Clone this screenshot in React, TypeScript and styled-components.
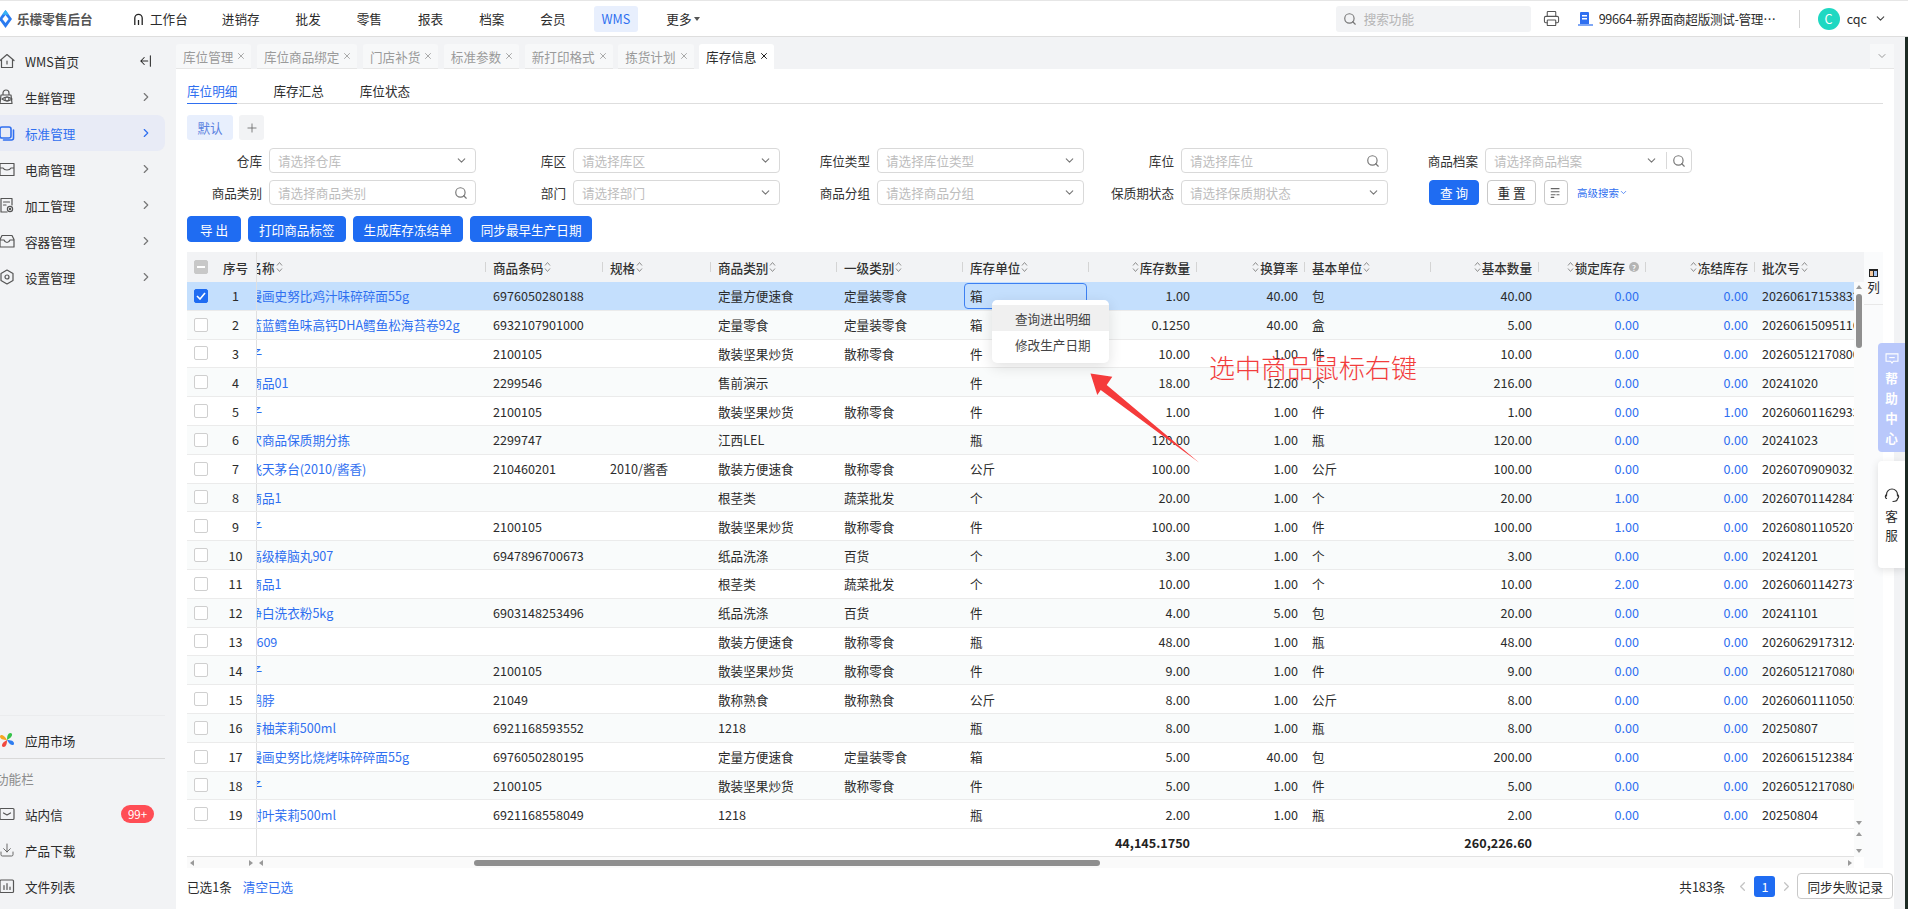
import React from "react";
import styled, { createGlobalStyle } from "styled-components";
import { ChevronDown, ChevronLeft, ChevronRight, Printer, Search, X, Plus, Download } from "lucide-react";

const GlobalStyle = createGlobalStyle`
  html, body { margin: 0; padding: 0; overflow: hidden; background: #f2f3f5; }
  * { box-sizing: border-box; }
  body {
    font-family: "Noto Sans CJK SC", "Noto Sans", "Liberation Sans", sans-serif;
    font-size: 12.6px;
    color: #2b2b2b;
  }
`;

const BLUE = "#1f6cf2";
const LINK = "#2f6ff0";

const Shell = styled.div`
  position: relative;
  width: 1908px;
  height: 909px;
  display: flex;
  flex-direction: column;
  overflow: hidden;
`;

/* ---------- top bar ---------- */
const TopBar = styled.header`
  height: 37px;
  flex: none;
  display: flex;
  align-items: center;
  background: #fff;
  border-top: 1px solid #e6e6e6;
  border-bottom: 1px solid #dedede;
  padding-right: 21px;
`;
const Brand = styled.div`
  width: 126px;
  display: flex;
  align-items: center;
  gap: 5px;
  font-weight: 700;
  color: #555;
  white-space: nowrap;
`;
const NavList = styled.nav`
  display: flex;
  align-items: center;
  gap: 20px;
`;
const NavItem = styled.div<{ $active?: boolean }>`
  height: 26px;
  padding: 0 8px;
  display: flex;
  align-items: center;
  border-radius: 3px;
  white-space: nowrap;
  background: ${(p) => (p.$active ? "#e8effd" : "transparent")};
  color: ${(p) => (p.$active ? LINK : "#2b2b2b")};
  &:first-child { margin-right: -2px; gap: 7px; }
`;
const Caret = styled.span`
  width: 0;
  height: 0;
  margin-left: 3px;
  border-left: 3px solid transparent;
  border-right: 3px solid transparent;
  border-top: 4px solid #555;
`;
const TopRight = styled.div`
  margin-left: auto;
  display: flex;
  align-items: center;
`;
const SearchBox = styled.div`
  width: 195px;
  height: 26px;
  padding-left: 7px;
  display: flex;
  align-items: center;
  gap: 7px;
  background: #f2f3f5;
  border-radius: 3px;
  color: #b5b5b5;
  svg { color: #777; }
`;
const ShopName = styled.span`
  width: 182px;
  margin-left: 6px;
  letter-spacing: -0.3px;
  white-space: nowrap;
  overflow: hidden;
  text-overflow: ellipsis;
  color: #2b2b2b;
`;
const TopDivider = styled.span`
  width: 1px;
  height: 18px;
  background: #d4d4d4;
  margin: 0 18px;
`;
const Avatar = styled.span`
  width: 22px;
  height: 22px;
  border-radius: 50%;
  background: #1fd8c2;
  color: #fff;
  display: flex;
  align-items: center;
  justify-content: center;
  margin-right: 7px;
`;

/* ---------- body ---------- */
const Body = styled.div`
  flex: 1;
  display: flex;
  min-height: 0;
`;
const Sidebar = styled.aside`
  width: 176px;
  flex: none;
  padding: 6px 0 5px;
  display: flex;
  flex-direction: column;
  overflow: hidden;
  background: #f2f3f5;
`;
const SideItem = styled.div<{ $active?: boolean }>`
  width: 165px;
  height: 36px;
  flex: none;
  display: flex;
  align-items: center;
  gap: 10px;
  padding-right: 12px;
  border-radius: 0 8px 8px 0;
  background: ${(p) => (p.$active ? "#e8ebf6" : "transparent")};
  color: ${(p) => (p.$active ? LINK : "#2b2b2b")};
  > svg:first-child { flex: none; margin-left: -1px; color: ${(p) => (p.$active ? LINK : "#555")}; }
`;
const SideLabel = styled.span`
  flex: 1;
  white-space: nowrap;
`;
const SideBottom = styled.div`
  margin-top: auto;
  display: flex;
  flex-direction: column;
`;
const SideRule = styled.div<{ $faint?: boolean }>`
  width: 165px;
  height: 1px;
  background: ${(p) => (p.$faint ? "#ebecee" : "#d9d9d9")};
  margin-bottom: ${(p) => (p.$faint ? "6px" : "0")};
`;
const SideCaption = styled.div`
  height: 37px;
  line-height: 40px;
  margin-left: -4px;
  color: #8c8c8c;
`;
const Badge = styled.span`
  width: 33px;
  height: 18px;
  margin-right: -1px;
  border-radius: 9px;
  background: #ff4d55;
  color: #fff;
  font-size: 11.5px;
  display: flex;
  align-items: center;
  justify-content: center;
`;

const Main = styled.main`
  width: 1718px;
  flex: none;
  display: flex;
  flex-direction: column;
`;
const Gutter = styled.div`
  width: 11px;
  flex: none;
`;
const Desktop = styled.div`
  width: 3px;
  flex: none;
  background: #1d2b24;
`;

/* ---------- page tabs ---------- */
const TabStrip = styled.div`
  height: 32px;
  flex: none;
  padding-top: 7px;
  display: flex;
  gap: 5.5px;
`;
const PageTab = styled.div<{ $active?: boolean }>`
  display: flex;
  align-items: center;
  gap: 3px;
  padding: 0 5px 0 7px;
  white-space: nowrap;
  border-radius: 3px 3px 0 0;
  background: ${(p) => (p.$active ? "#fff" : "#f7f8f9")};
  color: ${(p) => (p.$active ? "#2b2b2b" : "#9a9a9a")};
  border-bottom: 1px solid ${(p) => (p.$active ? "#fff" : "#e6e6e6")};
`;
const TabMore = styled.div`
  margin-left: auto;
  width: 24px;
  display: flex;
  align-items: center;
  justify-content: center;
  background: #f7f8f9;
  border-bottom: 1px solid #e6e6e6;
  color: #999;
`;
const Content = styled.div`
  flex: 1;
  min-height: 0;
  background: #fff;
  display: flex;
  flex-direction: column;
  padding-left: 11px;
`;
const SubTabs = styled.div`
  width: 1696px;
  height: 35px;
  flex: none;
  display: flex;
  gap: 36px;
  border-bottom: 1px solid #dedede;
`;
const SubTab = styled.div<{ $active?: boolean }>`
  height: 35px;
  line-height: 43px;
  color: ${(p) => (p.$active ? LINK : "#2b2b2b")};
  border-bottom: 1px solid ${(p) => (p.$active ? LINK : "transparent")};
`;
const SchemeRow = styled.div`
  margin-top: 11px;
  display: flex;
  gap: 6px;
`;
const SchemeChip = styled.div`
  width: 46px;
  height: 25px;
  border-radius: 3px;
  background: #e8effd;
  color: #5c82e0;
  display: flex;
  align-items: center;
  justify-content: center;
`;
const SchemeAdd = styled(SchemeChip)`
  width: 25px;
  background: #f2f3f5;
  color: #666;
`;

/* ---------- filter form ---------- */
const FilterGrid = styled.div`
  margin-top: 8px;
  width: 1505px;
  display: grid;
  grid-template-columns: repeat(5, 289px);
  column-gap: 15px;
  row-gap: 7px;
`;
const Field = styled.div`
  display: grid;
  grid-template-columns: 75px 207px;
  column-gap: 7px;
  align-items: center;
`;
const FieldLabel = styled.label`
  text-align: right;
  white-space: nowrap;
  color: #333;
`;
const InputBox = styled.div`
  height: 25px;
  padding: 0 7px 0 8px;
  display: flex;
  align-items: center;
  border: 1px solid #d9d9d9;
  border-radius: 4px;
  color: #bdbdbd;
  svg { color: #777; flex: none; }
`;
const Placeholder = styled.span`
  flex: 1;
  white-space: nowrap;
`;
const InputDivider = styled.span`
  width: 1px;
  height: 17px;
  margin: 0 5px 0 8px;
  background: #d9d9d9;
`;
const QueryRow = styled.div`
  display: flex;
  align-items: center;
  gap: 8px;
  padding-left: 26px;
`;
const Button = styled.button<{ $primary?: boolean; $width?: number }>`
  height: 25px;
  padding: ${(p) => (p.$width ? "0" : "0 10px")};
  width: ${(p) => (p.$width ? `${p.$width}px` : "auto")};
  border-radius: 4px;
  font: inherit;
  white-space: nowrap;
  display: flex;
  align-items: center;
  justify-content: center;
  border: 1px solid ${(p) => (p.$primary ? BLUE : "#c9c9c9")};
  background: ${(p) => (p.$primary ? BLUE : "#fff")};
  color: ${(p) => (p.$primary ? "#fff" : "#2b2b2b")};
`;
const IconButton = styled(Button)`
  width: 24px;
  padding: 0;
  color: #666;
`;
const AdvancedLink = styled.span`
  margin-left: 1px;
  font-size: 10.5px;
  color: ${LINK};
  display: flex;
  align-items: center;
  white-space: nowrap;
`;
const ActionRow = styled.div`
  margin-top: 11px;
  height: 26px;
  display: flex;
  gap: 7px;
  button { height: 26px; }
`;

/* ---------- table ---------- */
const COLUMNS = "28px 41px 230px 117px 108px 126px 126px 126px 108px 108px 126px 108px 107px 109px 99px";

const TableArea = styled.div`
  margin-top: 10px;
  display: flex;
`;
const TableMain = styled.div`
  width: 1677px;
  flex: none;
  display: flex;
  flex-direction: column;
`;
const HeadRow = styled.div`
  height: 30px;
  display: grid;
  grid-template-columns: ${COLUMNS} 10px;
  background: #f2f3f5;
  font-weight: 500;
  color: #333;
`;
const BodySplit = styled.div`
  display: flex;
`;
const RowStack = styled.div`
  width: 1667px;
  flex: none;
`;
const DataRow = styled.div<{ $selected?: boolean; $even?: boolean }>`
  height: 28.8px;
  display: grid;
  grid-template-columns: ${COLUMNS};
  border-bottom: 1px solid #ebebeb;
  background: ${(p) => (p.$selected ? "#c4dffd" : p.$even ? "#f9fbfb" : "#fff")};
`;
const SumRow = styled(DataRow)`
  height: 28px;
  font-weight: 700;
  color: #222;
  border-bottom: 1px solid #e2e2e2;
`;
const Cell = styled.div<{ $right?: boolean; $focus?: boolean }>`
  min-width: 0;
  padding: 0 7px;
  display: flex;
  align-items: center;
  justify-content: ${(p) => (p.$right ? "flex-end" : "flex-start")};
  white-space: nowrap;
  overflow: hidden;
  ${(p) => p.$focus && "margin: 1px 2px 1px 1px; padding: 0 5px; border: 1px solid #3d80f2; border-radius: 4px;"}
`;
const HeadCell = styled(Cell)`
  position: relative;
  gap: 1px;
  &::after {
    content: "";
    position: absolute;
    right: 0;
    top: 10px;
    height: 10px;
    width: 1px;
    background: #d4d4d4;
  }
`;
const CheckCell = styled(Cell)`
  padding: 0;
  justify-content: center;
`;
const SeqCell = styled(Cell)`
  padding: 0;
  justify-content: center;
`;
const NameCell = styled(Cell)`
  padding: 0;
  border-left: 1px solid #e0e0e0;
  color: ${LINK};
`;
const NameText = styled.span`
  margin-left: -7.6px;
`;
const LinkNumber = styled.span`
  color: ${LINK};
`;
const BatchCell = styled(Cell)`
  padding-right: 0;
`;
const Checkbox = styled.span<{ $state?: "on" | "mixed" }>`
  width: 14px;
  height: 14px;
  border-radius: 2px;
  display: flex;
  align-items: center;
  justify-content: center;
  color: #fff;
  border: 1.5px solid ${(p) => (p.$state === "on" ? BLUE : p.$state === "mixed" ? "#c8c8c8" : "#cfcfcf")};
  background: ${(p) => (p.$state === "on" ? BLUE : p.$state === "mixed" ? "#c8c8c8" : "#fff")};
`;
const MixedDash = styled.span`
  width: 8px;
  height: 2px;
  background: #fff;
`;
const InfoDot = styled.span`
  width: 10px;
  height: 10px;
  margin-left: 3px;
  border-radius: 50%;
  background: #b4b4b4;
  color: #fff;
  font-size: 8px;
  display: flex;
  align-items: center;
  justify-content: center;
`;
const Rail = styled.div`
  width: 10px;
  flex: none;
  background: #fafbfb;
  display: flex;
  flex-direction: column;
  align-items: center;
  justify-content: space-between;
  padding: 3px 0 4px;
`;
const RailTop = styled.div`
  display: flex;
  flex-direction: column;
  align-items: center;
  gap: 5px;
`;
const RailThumb = styled.div`
  width: 6px;
  height: 54px;
  border-radius: 3px;
  background: #8f8f8f;
`;
const Tri = styled.span<{ $dir: "up" | "down" | "left" | "right" }>`
  width: 0;
  height: 0;
  flex: none;
  border-style: solid;
  border-color: transparent;
  ${(p) =>
    p.$dir === "up"
      ? "border-width: 0 3px 4px; border-bottom-color: #9a9a9a;"
      : p.$dir === "down"
      ? "border-width: 4px 3px 0; border-top-color: #9a9a9a;"
      : p.$dir === "left"
      ? "border-width: 3px 4px 3px 0; border-right-color: #9a9a9a;"
      : "border-width: 3px 0 3px 4px; border-left-color: #9a9a9a;"}
`;
const HScroll = styled.div`
  width: 1667px;
  height: 11px;
  display: flex;
  align-items: center;
  background: #fafafa;
`;
const HFixed = styled.div`
  width: 69px;
  flex: none;
  display: flex;
  justify-content: space-between;
  padding: 0 3px;
`;
const HTrack = styled.div`
  flex: 1;
  display: flex;
  align-items: center;
  padding: 0 2px 0 3px;
`;
const HThumb = styled.div`
  width: 626px;
  height: 6px;
  margin-left: 211px;
  margin-right: auto;
  border-radius: 3px;
  background: #8f8f8f;
`;
const ColumnPanel = styled.div`
  width: 19px;
  flex: none;
  background: #fafbfc;
`;
const ColumnButton = styled.div`
  height: 53px;
  padding-top: 17px;
  display: flex;
  flex-direction: column;
  align-items: center;
  gap: 3px;
  border-bottom: 1px solid #e8e8e8;
  line-height: 14px;
`;

/* ---------- footer ---------- */
const Footer = styled.footer`
  flex: 1;
  display: flex;
  align-items: center;
  padding: 0 1px 5px 0;
`;
const ClearLink = styled.span`
  color: ${LINK};
  margin-left: 11px;
`;
const Pager = styled.div`
  margin-left: auto;
  display: flex;
  align-items: center;
  svg { color: #c4c4c4; }
`;
const PageNo = styled.span`
  width: 21px;
  height: 21px;
  margin: 0 4px;
  border-radius: 3px;
  background: ${BLUE};
  color: #fff;
  display: flex;
  align-items: center;
  justify-content: center;
`;
const SyncButton = styled(Button)`
  height: 26px;
  margin-left: 3px;
  padding: 0 9px;
`;

/* ---------- overlays ---------- */
const ContextMenu = styled.div`
  position: absolute;
  left: 992px;
  top: 300px;
  width: 117px;
  padding: 5px 0 6px;
  background: #fff;
  border-radius: 5px;
  box-shadow: 0 4px 14px rgba(0, 0, 0, 0.12);
  color: #444;
`;
const MenuItem = styled.div<{ $hover?: boolean }>`
  height: 26px;
  padding-left: 23px;
  display: flex;
  align-items: center;
  white-space: nowrap;
  background: ${(p) => (p.$hover ? "#f0f0f0" : "#fff")};
`;
const Annotation = styled.div`
  position: absolute;
  left: 1209px;
  top: 349px;
  font-size: 26px;
  line-height: 36px;
  font-weight: 300;
  color: #f23c3c;
  white-space: nowrap;
`;
const ArrowMark = styled.svg`
  position: absolute;
  left: 1080px;
  top: 365px;
`;
const HelpTab = styled.div`
  position: absolute;
  left: 1878px;
  top: 343px;
  width: 27px;
  height: 109px;
  padding-top: 10px;
  border-radius: 4px 0 0 4px;
  background: #b9c8fb;
  color: #fff;
  font-weight: 700;
  display: flex;
  flex-direction: column;
  align-items: center;
  line-height: 20px;
`;
const ServiceTab = styled.div`
  position: absolute;
  left: 1878px;
  top: 461px;
  width: 27px;
  height: 107px;
  padding-top: 27px;
  border-radius: 4px 0 0 4px;
  background: #fff;
  box-shadow: 0 2px 8px rgba(0, 0, 0, 0.12);
  display: flex;
  flex-direction: column;
  align-items: center;
  line-height: 19px;
  svg { margin-bottom: 3px; color: #333; }
`;

/* ---------- drawn icons ---------- */
const Glyph = ({ children, size = 16 }: { children: React.ReactNode; size?: number }) => (
  <svg width={size} height={size} viewBox="0 0 16 16" fill="none" stroke="currentColor" strokeWidth="1.2" strokeLinejoin="round" strokeLinecap="round">
    {children}
  </svg>
);
const Logo = () => (
  <svg width="13" height="18" viewBox="0 0 13 18" style={{ marginLeft: -1 }}>
    <path d="M6.5 0 13 9l-6.5 9L0 9z" fill="#2a7bf0" />
    <path d="M6.5 5 9.6 9l-3.1 4L3.4 9z" fill="#fff" />
    <path d="M6.5 0 3 4.8l3.5 0 3.5 0z" fill="#37b3f5" />
  </svg>
);
const NavHome = () => (
  <svg width="9" height="12" viewBox="0 0 9 12" fill="none" stroke="#222" strokeWidth="1.3">
    <path d="M.8 12V5a3.7 3.7 0 0 1 7.4 0v7" />
    <path d="M4.5 7v5" />
  </svg>
);
const IconHome = () => (
  <Glyph><path d="M1 7.5 8 1.5l7 6M2.5 6.5V14.5h11V6.5" /><path d="M8 8v3" /></Glyph>
);
const IconFresh = () => (
  <Glyph><path d="M4 6V4a3 3 0 0 1 6 0v2M2 6h10l1 8.500H1z" /><circle cx="8" cy="10" r="2" /><path d="M3 10q5-4 10 0q-5 4-10 0z" /></Glyph>
);
const IconStandard = () => (
  <Glyph><rect x="1" y="2" width="11" height="11" rx="2" strokeWidth="1.6" /><path d="M14.500 5v8a2 2 0 0 1-2 2h-8" strokeWidth="1.6" /></Glyph>
);
const IconShop = () => (
  <Glyph><path d="M1 2.500h14V14.500H1zM1 7h3q1 2 4 2t4-2h3" /></Glyph>
);
const IconProcess = () => (
  <Glyph><path d="M8 15H2V1.500h11V8" /><path d="M4.500 5h6M4.500 8H7" /><circle cx="11" cy="12" r="2.600" /><circle cx="11" cy="12" r=".6" /></Glyph>
);
const IconBox = () => (
  <Glyph><path d="M3 2.500h10l2 4V14H1V6.500zM1 7h4q1 2.500 3 2.500T11 7h4" /></Glyph>
);
const IconGear = () => (
  <Glyph><path d="M8 1l6 3.500v7L8 15l-6-3.500v-7z" /><circle cx="8" cy="8" r="2" /></Glyph>
);
const IconMail = () => (
  <Glyph><rect x="1" y="2.500" width="14" height="11" rx="1" /><path d="m4.500 7 3.500 2 3.500-2" /></Glyph>
);
const IconFiles = () => (
  <Glyph><rect x="1" y="2" width="13.500" height="12.500" rx="1" /><path d="M5 7.500v4M8 5.500v6M11 9v2.500" /></Glyph>
);
const IconMarket = () => (
  <svg width="16" height="16" viewBox="0 0 16 16">
    <path d="M8 8C4 8 1 7 1 4.500 1 2 5 2 8 8z" fill="#f5a623" />
    <path d="M8 8c0-4 1-7 3.500-7C14 1 14 5 8 8z" fill="#36c24a" />
    <path d="M8 8c4 0 7 1 7 3.500C15 14 11 14 8 8z" fill="#2f7df0" />
    <path d="M8 8c0 4-1 7-3.500 7C2 15 2 11 8 8z" fill="#f0483e" />
  </svg>
);
const IconCollapse = () => (
  <Glyph size={14}><path d="M13 2v12M10 8H2M6 4 2 8l4 4" /></Glyph>
);
const IconShopDoc = () => (
  <svg width="15" height="16" viewBox="0 0 15 16">
    <rect x="2" y="1" width="9" height="14" rx="1" fill="#2f6ff0" />
    <rect x="4" y="4" width="5" height="1.500" fill="#fff" />
    <rect x="4" y="7" width="5" height="1.500" fill="#fff" />
    <rect x="0" y="13" width="15" height="2" fill="#7fa7f5" />
  </svg>
);
const IconDensity = () => (
  <Glyph size={14}><path d="M2.500 3h9M2.500 6.500h9M2.500 10H7M9 10h2.500M2.500 13h3" /></Glyph>
);
const IconColumns = () => (
  <svg width="9" height="8" viewBox="0 0 9 8">
    <rect width="9" height="2" fill="#222" />
    <rect y="2" width="1" height="6" fill="#222" />
    <rect x="4" y="2" width="1" height="6" fill="#222" />
    <rect x="8" y="2" width="1" height="6" fill="#222" />
    <rect y="7" width="9" height="1" fill="#222" />
    <rect x="1" y="2" width="3" height="5" fill="#f3c9a0" />
    <rect x="5" y="2" width="3" height="5" fill="#a9c8f5" />
  </svg>
);
const SortMark = () => (
  <svg width="7" height="12" viewBox="0 0 7 12" fill="none" stroke="#8f8f8f" strokeWidth="1" style={{ flex: "none" }}>
    <path d="M1 4.500 3.500 1.500 6 4.500M1 7.500 3.500 10.500 6 7.500" />
  </svg>
);
const IconHelp = () => (
  <svg width="14" height="11" viewBox="0 0 15 12" fill="none" stroke="#fff" strokeWidth="1.2" style={{ marginBottom: 4 }}>
    <path d="M1 1h13v8H9l-1.500 2L6 9H1z" /><path d="M4.500 5h6" />
  </svg>
);
const IconHeadset = () => (
  <svg width="16" height="15" viewBox="0 0 16 15" fill="none" stroke="currentColor" strokeWidth="1.2" strokeLinecap="round">
    <path d="M2.500 8V6.500a5.500 5.500 0 0 1 11 0V8" />
    <path d="M2.500 6.500C1 7 1 10 2.500 10.500M13.500 6.500c1.500.5 1.500 3.500 0 4M13.500 10.500c0 2-2 3-4.500 3" />
  </svg>
);

/* ---------- data ---------- */
type Row = {
  name: string; code: string; spec: string; cat: string; top: string; unit: string;
  qty: string; rate: string; base: string; baseQty: string; locked: string; frozen: string; batch: string;
};
const r = (name: string, code: string, spec: string, cat: string, top: string, unit: string, qty: string, rate: string, base: string, baseQty: string, locked: string, frozen: string, batch: string): Row => ({
  name, code, spec, cat, top, unit, qty, rate, base, baseQty, locked, frozen, batch,
});

const ROWS: Row[] = [
  r("漫画史努比鸡汁味碎碎面55g", "6976050280188", "", "定量方便速食", "定量装零食", "箱", "1.00", "40.00", "包", "40.00", "0.00", "0.00", "20260617153832"),
  r("蓝蓝鳕鱼味高钙DHA鳕鱼松海苔卷92g", "6932107901000", "", "定量零食", "定量装零食", "箱", "0.1250", "40.00", "盒", "5.00", "0.00", "0.00", "20260615095116"),
  r("子", "2100105", "", "散装坚果炒货", "散称零食", "件", "10.00", "1.00", "件", "10.00", "0.00", "0.00", "20260512170800"),
  r("商品01", "2299546", "", "售前演示", "", "件", "18.00", "12.00", "个", "216.00", "0.00", "0.00", "20241020"),
  r("子", "2100105", "", "散装坚果炒货", "散称零食", "件", "1.00", "1.00", "件", "1.00", "0.00", "1.00", "20260601162933"),
  r("次商品保质期分拣", "2299747", "", "江西LEL", "", "瓶", "120.00", "1.00", "瓶", "120.00", "0.00", "0.00", "20241023"),
  r("飞天茅台(2010/酱香)", "210460201", "2010/酱香", "散装方便速食", "散称零食", "公斤", "100.00", "1.00", "公斤", "100.00", "0.00", "0.00", "20260709090321"),
  r("商品1", "", "", "根茎类", "蔬菜批发", "个", "20.00", "1.00", "个", "20.00", "1.00", "0.00", "20260701142847"),
  r("子", "2100105", "", "散装坚果炒货", "散称零食", "件", "100.00", "1.00", "件", "100.00", "1.00", "0.00", "20260801105207"),
  r("高级樟脑丸907", "6947896700673", "", "纸品洗涤", "百货", "个", "3.00", "1.00", "个", "3.00", "0.00", "0.00", "20241201"),
  r("商品1", "", "", "根茎类", "蔬菜批发", "个", "10.00", "1.00", "个", "10.00", "2.00", "0.00", "20260601142737"),
  r("净白洗衣粉5kg", "6903148253496", "", "纸品洗涤", "百货", "件", "4.00", "5.00", "包", "20.00", "0.00", "0.00", "20241101"),
  r("1609", "", "", "散装方便速食", "散称零食", "瓶", "48.00", "1.00", "瓶", "48.00", "0.00", "0.00", "20260629173124"),
  r("子", "2100105", "", "散装坚果炒货", "散称零食", "件", "9.00", "1.00", "件", "9.00", "0.00", "0.00", "20260512170800"),
  r("鸭脖", "21049", "", "散称熟食", "散称熟食", "公斤", "8.00", "1.00", "公斤", "8.00", "0.00", "0.00", "20260601110502"),
  r("青柚茉莉500ml", "6921168593552", "", "1218", "", "瓶", "8.00", "1.00", "瓶", "8.00", "0.00", "0.00", "20250807"),
  r("漫画史努比烧烤味碎碎面55g", "6976050280195", "", "定量方便速食", "定量装零食", "箱", "5.00", "40.00", "包", "200.00", "0.00", "0.00", "20260615123847"),
  r("子", "2100105", "", "散装坚果炒货", "散称零食", "件", "5.00", "1.00", "件", "5.00", "0.00", "0.00", "20260512170800"),
  r("树叶茉莉500ml", "6921168558049", "", "1218", "", "瓶", "2.00", "1.00", "瓶", "2.00", "0.00", "0.00", "20250804"),
];

const NAV = ["进销存", "批发", "零售", "报表", "档案", "会员"];
const TABS = ["库位管理", "库位商品绑定", "门店补货", "标准参数", "新打印格式", "拣货计划"];
const SIDE = [
  { label: "生鲜管理", icon: <IconFresh /> },
  { label: "标准管理", icon: <IconStandard />, active: true },
  { label: "电商管理", icon: <IconShop /> },
  { label: "加工管理", icon: <IconProcess /> },
  { label: "容器管理", icon: <IconBox /> },
  { label: "设置管理", icon: <IconGear /> },
];
const FILTERS = [
  { label: "仓库", hint: "请选择仓库" },
  { label: "库区", hint: "请选择库区" },
  { label: "库位类型", hint: "请选择库位类型" },
  { label: "库位", hint: "请选择库位", search: true },
  { label: "商品档案", hint: "请选择商品档案", both: true },
  { label: "商品类别", hint: "请选择商品类别", search: true },
  { label: "部门", hint: "请选择部门" },
  { label: "商品分组", hint: "请选择商品分组" },
  { label: "保质期状态", hint: "请选择保质期状态" },
];
const HEAD_LEFT = ["商品条码", "规格", "商品类别", "一级类别", "库存单位"];

export default function App() {
  return (
    <Shell>
      <GlobalStyle />
      <TopBar>
        <Brand><Logo />乐檬零售后台</Brand>
        <NavList>
          <NavItem><NavHome />工作台</NavItem>
          {NAV.map((n) => <NavItem key={n}>{n}</NavItem>)}
          <NavItem $active>WMS</NavItem>
          <NavItem>更多<Caret /></NavItem>
        </NavList>
        <TopRight>
          <SearchBox><Search size={14} />搜索功能</SearchBox>
          <Printer size={17} color="#555" strokeWidth={1.5} style={{ margin: "0 18px 0 12px" }} />
          <IconShopDoc />
          <ShopName>99664-新界面商超版测试-管理员账号门店</ShopName>
          <TopDivider />
          <Avatar>C</Avatar>
          cqc
          <ChevronDown size={13} color="#444" style={{ marginLeft: 7 }} />
        </TopRight>
      </TopBar>

      <Body>
        <Sidebar>
          <SideItem><IconHome /><SideLabel>WMS首页</SideLabel><IconCollapse /></SideItem>
          {SIDE.map((s) => (
            <SideItem key={s.label} $active={s.active}>
              {s.icon}
              <SideLabel>{s.label}</SideLabel>
              <ChevronRight size={14} color={s.active ? LINK : "#777"} />
            </SideItem>
          ))}
          <SideBottom>
            <SideRule $faint />
            <SideItem><IconMarket /><SideLabel>应用市场</SideLabel></SideItem>
            <SideRule />
            <SideCaption>功能栏</SideCaption>
            <SideItem><IconMail /><SideLabel>站内信</SideLabel><Badge>99+</Badge></SideItem>
            <SideItem><Download size={16} strokeWidth={1.3} /><SideLabel>产品下载</SideLabel></SideItem>
            <SideItem><IconFiles /><SideLabel>文件列表</SideLabel></SideItem>
          </SideBottom>
        </Sidebar>

        <Main>
          <TabStrip>
            {TABS.map((t) => (
              <PageTab key={t}>{t}<X size={10} color="#999" /></PageTab>
            ))}
            <PageTab $active>库存信息<X size={10} color="#222" strokeWidth={2.4} /></PageTab>
            <TabMore><ChevronDown size={12} /></TabMore>
          </TabStrip>

          <Content>
            <SubTabs>
              <SubTab $active>库位明细</SubTab>
              <SubTab>库存汇总</SubTab>
              <SubTab>库位状态</SubTab>
            </SubTabs>
            <SchemeRow>
              <SchemeChip>默认</SchemeChip>
              <SchemeAdd><Plus size={14} strokeWidth={1.4} /></SchemeAdd>
            </SchemeRow>

            <FilterGrid>
              {FILTERS.map((f) => (
                <Field key={f.label}>
                  <FieldLabel>{f.label}</FieldLabel>
                  <InputBox>
                    <Placeholder>{f.hint}</Placeholder>
                    {f.search && !f.both ? <Search size={14} /> : <ChevronDown size={13} />}
                    {f.both && <><InputDivider /><Search size={14} style={{ marginRight: -2 }} /></>}
                  </InputBox>
                </Field>
              ))}
              <QueryRow>
                <Button $primary $width={50}>查 询</Button>
                <Button $width={49}>重 置</Button>
                <IconButton><IconDensity /></IconButton>
                <AdvancedLink>高级搜索<ChevronDown size={9} /></AdvancedLink>
              </QueryRow>
            </FilterGrid>

            <ActionRow>
              <Button $primary $width={54}>导 出</Button>
              <Button $primary>打印商品标签</Button>
              <Button $primary>生成库存冻结单</Button>
              <Button $primary>同步最早生产日期</Button>
            </ActionRow>

            <TableArea>
              <TableMain>
                <HeadRow>
                  <CheckCell><Checkbox $state="mixed"><MixedDash /></Checkbox></CheckCell>
                  <SeqCell>序号</SeqCell>
                  <HeadCell as={NameCell} style={{ color: "#333" }}>
                    <NameText>名称</NameText><SortMark />
                  </HeadCell>
                  {HEAD_LEFT.map((h) => <HeadCell key={h}>{h}<SortMark /></HeadCell>)}
                  <HeadCell $right><SortMark />库存数量</HeadCell>
                  <HeadCell $right><SortMark />换算率</HeadCell>
                  <HeadCell>基本单位<SortMark /></HeadCell>
                  <HeadCell $right><SortMark />基本数量</HeadCell>
                  <HeadCell $right><SortMark />锁定库存<InfoDot>?</InfoDot></HeadCell>
                  <HeadCell $right><SortMark />冻结库存</HeadCell>
                  <Cell style={{ gap: 1 }}>批次号<SortMark /></Cell>
                  <span />
                </HeadRow>

                <BodySplit>
                  <RowStack>
                    {ROWS.map((row, i) => (
                      <DataRow key={i} $selected={i === 0} $even={i % 2 === 1}>
                        <CheckCell>
                          {i === 0 ? (
                            <Checkbox $state="on">
                              <svg width="10" height="8" viewBox="0 0 10 8" fill="none" stroke="#fff" strokeWidth="1.6"><path d="M1 4l3 3 5-6" /></svg>
                            </Checkbox>
                          ) : <Checkbox />}
                        </CheckCell>
                        <SeqCell>{i + 1}</SeqCell>
                        <NameCell><NameText>{row.name}</NameText></NameCell>
                        <Cell>{row.code}</Cell>
                        <Cell>{row.spec}</Cell>
                        <Cell>{row.cat}</Cell>
                        <Cell>{row.top}</Cell>
                        <Cell $focus={i === 0}>{row.unit}</Cell>
                        <Cell $right>{row.qty}</Cell>
                        <Cell $right>{row.rate}</Cell>
                        <Cell>{row.base}</Cell>
                        <Cell $right>{row.baseQty}</Cell>
                        <Cell $right><LinkNumber>{row.locked}</LinkNumber></Cell>
                        <Cell $right><LinkNumber>{row.frozen}</LinkNumber></Cell>
                        <BatchCell>{row.batch}</BatchCell>
                      </DataRow>
                    ))}
                  </RowStack>
                  <Rail>
                    <RailTop><Tri $dir="up" /><RailThumb /></RailTop>
                    <Tri $dir="down" />
                  </Rail>
                </BodySplit>

                <BodySplit>
                  <RowStack>
                    <SumRow>
                      <span /><span />
                      <NameCell />
                      <span /><span /><span /><span /><span />
                      <Cell $right>44,145.1750</Cell>
                      <span /><span />
                      <Cell $right>260,226.60</Cell>
                    </SumRow>
                  </RowStack>
                  <Rail>
                    <Tri $dir="up" />
                    <Tri $dir="down" />
                  </Rail>
                </BodySplit>

                <HScroll>
                  <HFixed><Tri $dir="left" /><Tri $dir="right" /></HFixed>
                  <HTrack>
                    <Tri $dir="left" />
                    <HThumb />
                    <Tri $dir="right" />
                  </HTrack>
                </HScroll>
              </TableMain>

              <ColumnPanel>
                <ColumnButton><IconColumns />列</ColumnButton>
              </ColumnPanel>
            </TableArea>

            <Footer>
              已选1条
              <ClearLink>清空已选</ClearLink>
              <Pager>
                共183条
                <ChevronLeft size={15} style={{ marginLeft: 10 }} />
                <PageNo>1</PageNo>
                <ChevronRight size={15} />
                <SyncButton>同步失败记录</SyncButton>
              </Pager>
            </Footer>
          </Content>
        </Main>
        <Gutter />
        <Desktop />
      </Body>

      <ContextMenu>
        <MenuItem $hover>查询进出明细</MenuItem>
        <MenuItem>修改生产日期</MenuItem>
      </ContextMenu>
      <Annotation>选中商品鼠标右键</Annotation>
      <ArrowMark width="130" height="105" viewBox="0 0 130 105">
        <path d="M10.500 8.500 32.300 11.700 26.700 20 119.300 97.700 20.700 25 17.300 30z" fill="#f53b3b" />
      </ArrowMark>
      <HelpTab><IconHelp />帮<br />助<br />中<br />心</HelpTab>
      <ServiceTab><IconHeadset />客<br />服</ServiceTab>
    </Shell>
  );
}
